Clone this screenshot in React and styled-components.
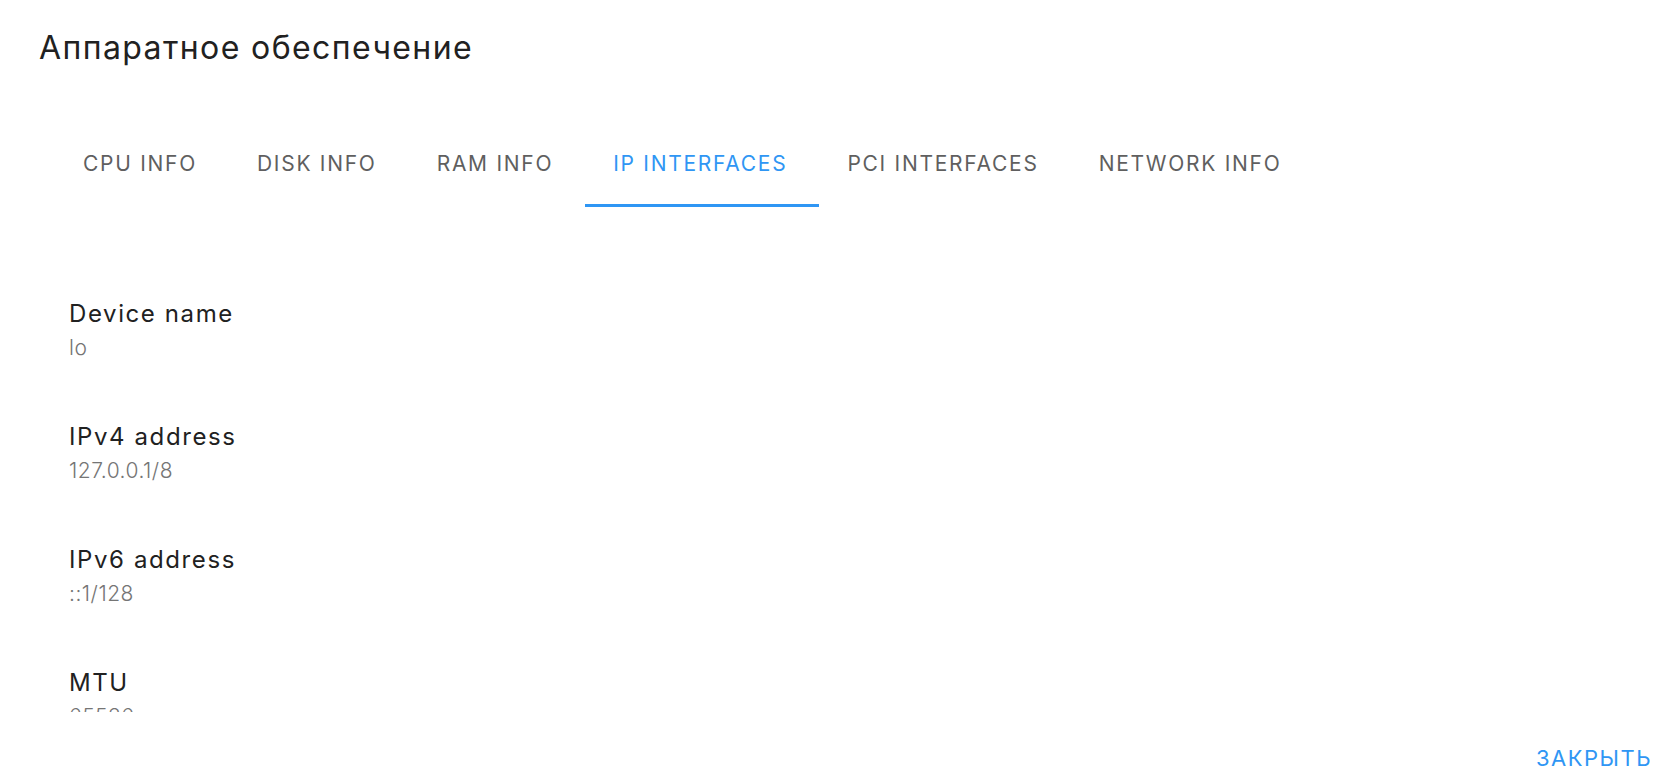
import React from "react";
import styled, { createGlobalStyle } from "styled-components";

const Global = createGlobalStyle`
  html, body { margin: 0; padding: 0; background: #fff; }
  body { font-family: Inter, "Open Sans", sans-serif; }
  * { box-sizing: border-box; }
`;

const Dialog = styled.div`
  width: 1660px;
  height: 784px;
  display: flex;
  flex-direction: column;
  background: #fff;
  overflow: hidden;
`;

const Header = styled.div`
  height: 120px;
  padding: 28px 39px 0;
`;

const Title = styled.h2`
  margin: 0;
  font-size: 32px;
  line-height: 40px;
  font-weight: 400;
  color: #212121;
  letter-spacing: 1.4px;
`;

const TabBar = styled.div`
  display: flex;
  height: 87px;
  padding-left: 55px;
`;

const Tab = styled.button`
  border: none;
  background: none;
  padding: 3px 32px 0 28px;
  font-family: inherit;
  font-size: 21px;
  font-weight: 400;
  letter-spacing: 1.72px;
  color: ${(p) => (p.$active ? "#2f96f4" : "#5f5f5f")};
  border-bottom: 3px solid ${(p) => (p.$active ? "#2f96f4" : "transparent")};
  cursor: pointer;
  text-transform: uppercase;
`;

const Content = styled.div`
  flex: 1;
  overflow: hidden;
  padding: 91px 69px 0;
`;

const Field = styled.div`
  margin-bottom: 55px;
`;

const Label = styled.div`
  font-size: 24px;
  line-height: 32px;
  color: #212121;
  letter-spacing: 1.6px;
`;

const Value = styled.div`
  font-size: 21px;
  line-height: 36px;
  font-weight: 300;
  color: #757575;
  letter-spacing: 0.5px;
`;

const Footer = styled.div`
  height: 72px;
  display: flex;
  justify-content: flex-end;
  align-items: flex-end;
  padding: 0 2px 8px 0;
`;

const CloseButton = styled.button`
  border: none;
  background: none;
  height: 36px;
  padding: 0 6px 0 8px;
  font-family: inherit;
  font-size: 22px;
  letter-spacing: 1.5px;
  color: #2f96f4;
  cursor: pointer;
`;

const tabs = ["CPU info", "Disk info", "RAM info", "IP interfaces", "PCI interfaces", "Network info"];

const fields = [
  ["Device name", "lo"],
  ["IPv4 address", "127.0.0.1/8"],
  ["IPv6 address", "::1/128"],
  ["MTU", "65536"],
];

export default function App() {
  return (
    <>
      <Global />
      <Dialog>
        <Header>
          <Title>Аппаратное обеспечение</Title>
        </Header>
        <TabBar>
          {tabs.map((t) => (
            <Tab key={t} $active={t === "IP interfaces"}>{t}</Tab>
          ))}
        </TabBar>
        <Content>
          {fields.map(([l, v]) => (
            <Field key={l}>
              <Label>{l}</Label>
              <Value>{v}</Value>
            </Field>
          ))}
        </Content>
        <Footer>
          <CloseButton>ЗАКРЫТЬ</CloseButton>
        </Footer>
      </Dialog>
    </>
  );
}
